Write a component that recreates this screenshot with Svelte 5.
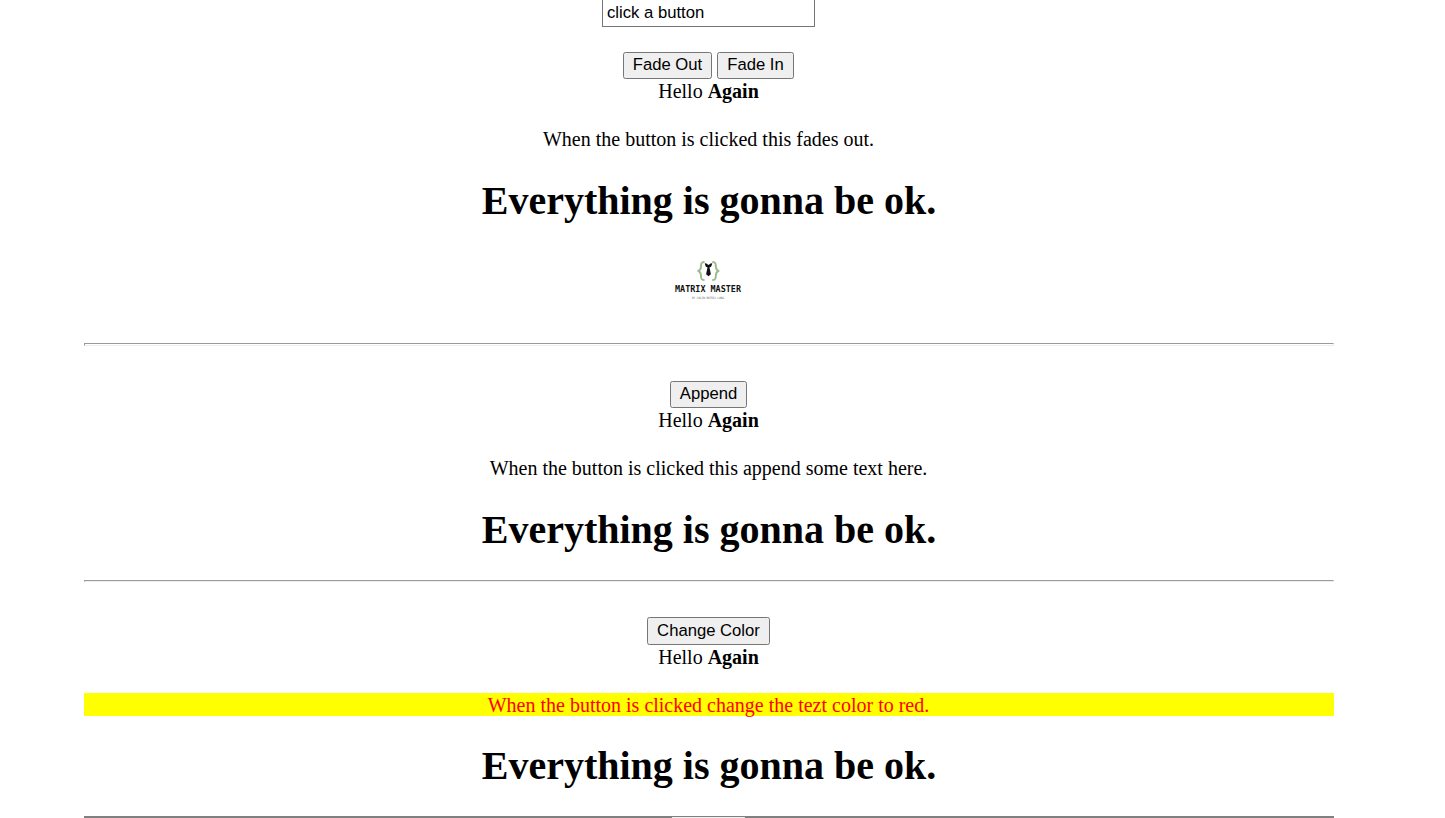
<script>
  let message = $state('click a button');
</script>

<main>
  <div class="field"><input type="text" bind:value={message} /></div>

  <section class="fade">
    <div class="actions">
      <button class="out">Fade Out</button>
      <button class="short">Fade In</button>
    </div>
    <div class="hello">Hello <b>Again</b></div>
    <p>When the button is clicked this fades out.</p>
    <h1>Everything is gonna be ok.</h1>
    <svg class="logo" width="100" height="60" viewBox="0 0 100 60" aria-label="Matrix Master">
      <g fill="none" stroke="#9dba8c" stroke-width="2" stroke-linejoin="round">
        <path d="M44.500 12c-3 0-3.500 1.200-3.500 3.800 0 3-.3 4.300-2.800 5.200 2.500.9 2.800 2.200 2.800 5.200 0 2.600.5 3.800 3.500 3.800" />
        <path d="M52.300 12c3 0 3.500 1.200 3.500 3.800 0 3 .3 4.300 2.800 5.200-2.500.9-2.800 2.200-2.800 5.200 0 2.600-.5 3.800-3.500 3.800" />
      </g>
      <path d="M44.700 13.400l1.300-.2 2.500 1.800 2.500-1.800 1.300.2-1.200 3.300-1.700.8.400 1.200 1.100 5.600-2.400 2-2.400-2 1.100-5.600.4-1.200-1.700-.8z" fill="#111" />
      <text class="brand" x="48" y="41.500" textLength="66" lengthAdjust="spacingAndGlyphs">MATRIX MASTER</text>
      <text class="tag" x="48" y="48.500" textLength="32" lengthAdjust="spacingAndGlyphs">BY COLIN MATRIX LONG</text>
    </svg>
  </section>
  <hr />

  <section class="append">
    <div class="actions"><button class="short">Append</button></div>
    <div class="hello">Hello <b>Again</b></div>
    <p>When the button is clicked this append some text here.</p>
    <h1>Everything is gonna be ok.</h1>
  </section>
  <hr />

  <section class="color">
    <div class="actions"><button class="wide">Change Color</button></div>
    <div class="hello">Hello <b>Again</b></div>
    <p class="changed">When the button is clicked change the tezt color to red.</p>
    <h1>Everything is gonna be ok.</h1>
  </section>
  <div class="next"><div></div></div>
</main>

<style>
  :global(body) {
    background: #fff;
    overflow: hidden;
  }
  main {
    width: 1250px;
    height: 818px;
    margin-left: 84px;
    overflow: hidden;
    color: #000;
    font: 19.900px/23px "Liberation Serif", serif;
    text-align: center;
  }
  .field {
    height: 52px;
    display: flex;
    justify-content: center;
    align-items: flex-start;
  }
  input {
    box-sizing: border-box;
    width: 213px;
    height: 28px;
    margin: -1px 1px 0 0;
    padding: 0 4px;
    border: 1px solid #767676;
    border-radius: 0;
    background: #fff;
    color: #000;
    font: 16.670px "Liberation Sans", sans-serif;
  }
  section {
    box-sizing: border-box;
  }
  .fade {
    height: 291px;
  }
  .append {
    height: 199px;
  }
  .color {
    height: 200px;
  }
  .actions {
    display: flex;
    justify-content: center;
    gap: 5px;
    height: 27px;
    padding-right: 1px;
  }
  button {
    box-sizing: border-box;
    height: 27px;
    padding: 0 0 2px;
    border: 1px solid #767676;
    border-radius: 2.500px;
    background: #efefef;
    color: #000;
    font: 16.670px "Liberation Sans", sans-serif;
    white-space: nowrap;
  }
  .out {
    width: 89px;
  }
  .short {
    width: 77px;
  }
  .wide {
    width: 123px;
  }
  .color .actions,
  .color button {
    height: 28px;
  }
  .color button {
    padding-bottom: 1px;
  }
  .hello,
  p {
    box-sizing: border-box;
    height: 23px;
    padding: 1px 1px 0 0;
    font-size: 20px;
  }
  p {
    margin: 25px 0 0;
  }
  .changed {
    background: #ff0;
    color: #f00;
  }
  h1 {
    height: 46px;
    margin: 28px 0 0;
    font-size: 40px;
    line-height: 46px;
    font-weight: bold;
    white-space: nowrap;
  }
  .color h1 {
    margin-top: 27px;
  }
  .logo {
    display: block;
    margin: 26px 0 0 576px;
  }
  .brand {
    fill: #111;
    font: bold 9px "DejaVu Sans Mono", monospace;
    text-anchor: middle;
  }
  .tag {
    fill: #666;
    font: 3px "DejaVu Sans Mono", monospace;
    text-anchor: middle;
  }
  hr {
    box-sizing: border-box;
    width: 1250px;
    height: 3px;
    margin: 0 0 35px;
    border: 1px solid #9a9a9a;
    border-right-color: #eee;
    border-bottom-color: #eee;
  }
  .append + hr {
    height: 2px;
  }
  .next {
    height: 2px;
    margin-top: -1px;
    padding-top: 1px;
    box-sizing: border-box;
    background: #808080;
  }
  .next div {
    width: 73px;
    height: 1px;
    margin-left: 588px;
    background: #efefef;
  }
</style>
